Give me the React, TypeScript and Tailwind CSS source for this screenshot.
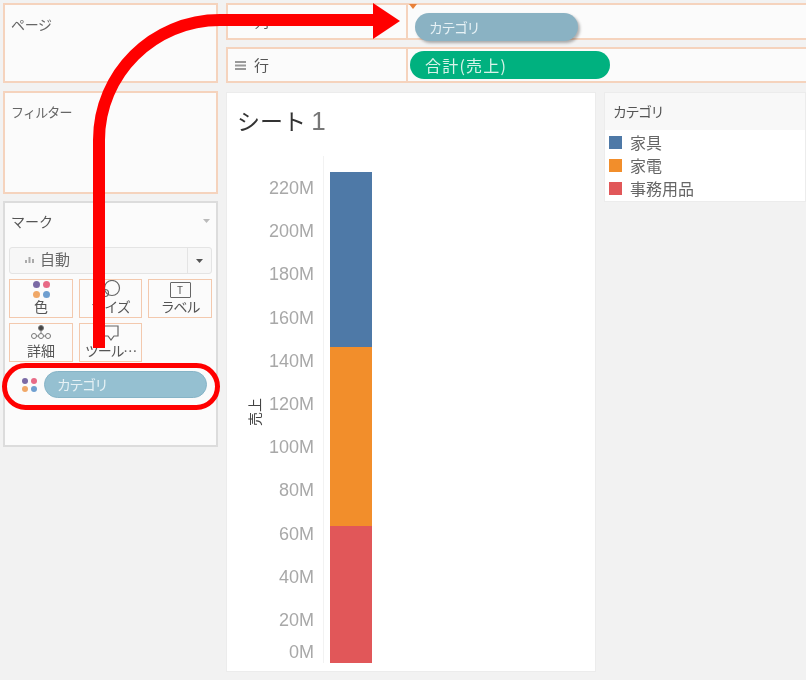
const font = { fontFamily: '"Noto Sans CJK JP", "Liberation Sans", sans-serif' }

const ticks = ['220M', '200M', '180M', '160M', '140M', '120M', '100M', '80M', '60M', '40M', '20M']

const legend = [
  { label: '家具', color: 'bg-[#4e79a7]' },
  { label: '家電', color: 'bg-[#f28e2b]' },
  { label: '事務用品', color: 'bg-[#e15759]' },
]

function Dots({ size = 'w-[7px] h-[7px]', gap = 'gap-x-[3px] gap-y-[2px]' }: { size?: string; gap?: string }) {
  return (
    <div className={`grid grid-cols-2 ${gap}`}>
      <span className={`${size} rounded-full bg-[#7b6aa5]`} />
      <span className={`${size} rounded-full bg-[#e86a86]`} />
      <span className={`${size} rounded-full bg-[#f0a868]`} />
      <span className={`${size} rounded-full bg-[#6f9fd0]`} />
    </div>
  )
}

function MarkButton({ icon, label, tight }: { icon: React.ReactNode; label: string; tight?: boolean }) {
  return (
    <div className="h-[39px] border border-[#f3c9ae] flex flex-col items-center overflow-hidden text-[14px] leading-[17px] text-[#555] bg-[#fbfbfb]">
      <div className="h-[18px] shrink-0 flex items-center justify-center">{icon}</div>
      <span className={`whitespace-nowrap ${tight ? 'tracking-[-1.2px]' : ''}`}>{label}</span>
    </div>
  )
}

function Shelf({ icon, label, className, children }: { icon: React.ReactNode; label: string; className: string; children?: React.ReactNode }) {
  return (
    <div className={`relative flex border-2 border-r-0 border-[#f5d3bd] bg-[#fbfbfb] ${className}`}>
      <div className="w-[180px] shrink-0 flex items-center gap-[8px] pl-[7px] border-r-2 border-[#f5d3bd] text-[15px] text-[#555]">
        {icon}
        <span>{label}</span>
      </div>
      {children}
    </div>
  )
}

function ShelfIcon() {
  return (
    <svg width="11" height="9" viewBox="0 0 11 9" fill="#999">
      <rect y="0" width="11" height="2" />
      <rect y="3.5" width="11" height="2" />
      <rect y="7" width="11" height="2" />
    </svg>
  )
}

export default function App() {
  return (
    <div style={font} className="relative w-[806px] h-[680px] overflow-hidden bg-[#f2f2f2] blur-[0.5px]">
      <div className="flex h-full pt-[3px] pl-[3px] gap-[8px]">
        {/* left column */}
        <div className="w-[215px] shrink-0 flex flex-col">
          <div className="h-[80px] border-2 border-[#f5d3bd] bg-[#fbfbfb] pl-[6px] pt-[9px] text-[14px] leading-[20px] tracking-[-0.3px] text-[#666]">ページ</div>
          <div className="mt-[8px] h-[103px] border-2 border-[#f5d3bd] bg-[#fbfbfb] pl-[6px] pt-[9px] text-[13px] leading-[20px] tracking-[-0.8px] text-[#666]">フィルター</div>
          <div className="mt-[7px] h-[246px] border-2 border-[#dcdcdc] bg-[#fbfbfb] flex flex-col">
            <div className="flex items-center justify-between pl-[6px] pr-[6px] pt-[5px] pb-[4px] h-[35px] text-[14px] text-[#555]">
              <span>マーク</span>
              <svg width="7" height="4" viewBox="0 0 7 4" fill="#bbb"><path d="M0 0h7L3.5 4z" /></svg>
            </div>
            <div className="mx-[4px] mt-[9px] h-[27px] border border-[#e4e4e4] rounded-[3px] bg-[#f7f7f7] flex items-center">
              <div className="flex-1 flex items-center gap-[6px] pl-[15px] pb-[3px] text-[15px] text-[#666]">
                <svg width="9" height="8" viewBox="0 0 9 8" fill="#aaa">
                  <rect x="0" y="5" width="2" height="3" />
                  <rect x="3.5" y="2" width="2" height="6" />
                  <rect x="7" y="4" width="2" height="4" />
                </svg>
                <span>自動</span>
              </div>
              <div className="w-[24px] h-full border-l border-[#e4e4e4] flex items-center justify-center">
                <svg width="7" height="4" viewBox="0 0 7 4" fill="#555"><path d="M0 0h7L3.5 4z" /></svg>
              </div>
            </div>
            <div className="mx-[4px] mt-[5px] grid grid-cols-[64px_63px_64px] gap-x-[6px] gap-y-[5px]">
              <MarkButton icon={<Dots gap="gap-x-[3px] gap-y-[3px]" />} label="色" />
              <MarkButton
                icon={
                  <svg width="24" height="18" viewBox="0 0 24 18" fill="none" stroke="#666" strokeWidth="1.2">
                    <circle cx="13" cy="8" r="7.5" />
                    <circle cx="6" cy="13" r="3.5" />
                  </svg>
                }
                label="サイズ"
                tight
              />
              <MarkButton
                icon={
                  <div className="mt-[1px] w-[21px] h-[16px] border border-[#666] rounded-[1px] flex items-center justify-center text-[10px] leading-none text-[#555]">T</div>
                }
                label="ラベル"
                tight
              />
              <MarkButton
                icon={
                  <svg width="24" height="18" viewBox="0 0 24 18" fill="none" stroke="#777" strokeWidth="1">
                    <circle cx="12" cy="4" r="2.5" fill="#444" />
                    <circle cx="5" cy="12" r="2.5" />
                    <circle cx="12" cy="12" r="2.5" />
                    <circle cx="19" cy="12" r="2.5" />
                    <path d="M12 6v3.5M7.5 12h2M14.5 12h2" />
                  </svg>
                }
                label="詳細"
              />
              <MarkButton
                icon={
                  <svg width="18" height="18" viewBox="0 0 18 18" fill="none" stroke="#666" strokeWidth="1.2">
                    <path d="M2 2h14v10h-4l-3 4-3-4H2z" />
                  </svg>
                }
                label="ツール…"
                tight
              />
            </div>
            <div className="mt-[9px] flex items-center pl-[17px] gap-[7px]">
              <Dots size="w-[6px] h-[6px]" />
              <div className="w-[163px] h-[27px] rounded-full bg-[#95c0d1] border border-[#86b4c7] flex items-center pl-[12px] pb-[1px] text-[14px] tracking-[-1.5px] text-[#e6f1f5]">カテゴリ</div>
            </div>
          </div>
        </div>

        {/* right area */}
        <div className="flex-1 min-w-0 flex flex-col">
          <Shelf icon={<ShelfIcon />} label="列" className="h-[37px]">
            <span className="absolute left-[181px] -top-[1px] border-x-[4px] border-t-[5px] border-x-transparent border-t-[#e8813a]" />
            <div className="relative z-10 ml-[7px] mt-[8px] w-[163px] h-[28px] rounded-full bg-[#8ab2c3] shadow-[2px_2px_3px_rgba(0,0,0,0.3)] flex items-center pl-[14px] text-[14px] tracking-[-1.5px] text-[#e6f1f5] shrink-0">カテゴリ</div>
          </Shelf>
          <Shelf icon={<ShelfIcon />} label="行" className="mt-[7px] h-[36px]">
            <div className="ml-[2px] mt-[2px] w-[200px] h-[28px] rounded-full bg-[#00b17f] flex items-center pl-[15px] pb-[1px] text-[16px] tracking-[1.2px] text-[#d8f3e9]">合計(売上)</div>
          </Shelf>
          <div className="mt-[9px] flex flex-1 gap-[8px] pb-[8px]">
            {/* sheet */}
            <div className="w-[370px] shrink-0 bg-white border border-[#ececec] flex flex-col">
              <div className="h-[63px] pl-[10px] pt-[8px] text-[23px] leading-[38px] text-[#333] whitespace-nowrap">
                シート <span className="text-[26px] text-[#777] [font-family:'Liberation_Sans',sans-serif]">1</span>
              </div>
              <div className="relative flex-1 flex">
                <span className="absolute left-[13px] top-[246px] -rotate-90 text-[14px] leading-[20px] text-[#444] whitespace-nowrap">売上</span>
                <div className="w-[87px] shrink-0 pt-[21px] text-right text-[18px] text-[#a8a8a8] [font-family:'Liberation_Sans',sans-serif]">
                  {ticks.map((t) => (
                    <div key={t} className="h-[43.2px] leading-[22px]">{t}</div>
                  ))}
                  <div className="-mt-[11px] leading-[22px]">0M</div>
                </div>
                <div className="ml-[9px] mb-[8px] border-l border-[#f2f2f2] pl-[6px] pt-[16px] flex">
                  <div className="w-[42px] flex flex-col h-[491px]">
                    <div className="h-[175px] bg-[#4e79a7]" />
                    <div className="h-[179px] bg-[#f28e2b]" />
                    <div className="h-[137px] bg-[#e15759]" />
                  </div>
                </div>
              </div>
            </div>
            {/* legend */}
            <div className="flex-1 h-[110px] bg-white border border-[#ececec] min-w-0">
              <div className="h-[37px] bg-[#f8f8f8] pl-[8px] flex items-center text-[14px] tracking-[-1.5px] text-[#555]">カテゴリ</div>
              <div className="pl-[4px] pt-[1px]">
                {legend.map((l) => (
                  <div key={l.label} className="flex items-center gap-[8px] h-[23px] text-[16px] text-[#666]">
                    <span className={`w-[13px] h-[13px] ${l.color}`} />
                    <span className="-mt-[1px] leading-[20px]">{l.label}</span>
                  </div>
                ))}
              </div>
            </div>
          </div>
        </div>
      </div>

      {/* red annotation on top */}
      <svg className="absolute inset-0" width="806" height="680" viewBox="0 0 806 680" fill="none">
        <path d="M99 348V140C99 74 153 20 220 20H376" stroke="#ff0000" strokeWidth="12" />
        <path d="M373 3L400 21L373 39z" fill="#ff0000" />
      </svg>
      <div className="absolute left-[2px] top-[363px] w-[218px] h-[47px] rounded-full border-[5px] border-[#ff0000]" />
    </div>
  )
}
